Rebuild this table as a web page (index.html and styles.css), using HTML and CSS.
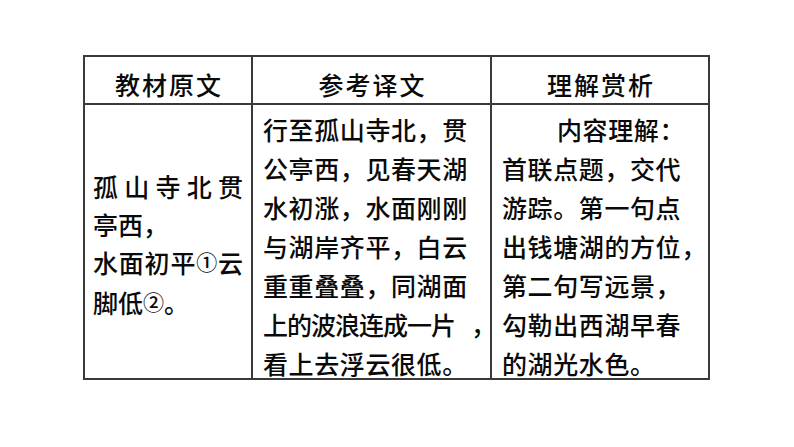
FILE: index.html
```html
<!DOCTYPE html>
<html lang="zh-CN">
<head>
<meta charset="utf-8">
<title>钱塘湖春行</title>
<link rel="stylesheet" href="styles.css">
</head>
<body>
<div class="page">
  <div class="grid">
    <div class="cell head">教材原文</div>
    <div class="cell head">参考译文</div>
    <div class="cell head">理解赏析</div>

    <div class="cell body orig">
      <div class="lines">
        <div class="line just">孤山寺北贯</div>
        <div class="line">亭西，</div>
        <div class="line just">水面初平<span class="note">①</span>云</div>
        <div class="line">脚低<span class="note">②</span>。</div>
      </div>
    </div>

    <div class="cell body text">
      <div class="line">行至孤山寺北，贯</div>
      <div class="line">公亭西，见春天湖</div>
      <div class="line">水初涨，水面刚刚</div>
      <div class="line">与湖岸齐平，白云</div>
      <div class="line">重重叠叠，同湖面</div>
      <div class="line"><span class="tight">上的波浪连成一片</span><span class="hang">，</span></div>
      <div class="line">看上去浮云很低。</div>
    </div>

    <div class="cell body text">
      <div class="line indent">内容理解：</div>
      <div class="line">首联点题，交代</div>
      <div class="line">游踪。第一句点</div>
      <div class="line">出钱塘湖的方位，</div>
      <div class="line">第二句写远景，</div>
      <div class="line">勾勒出西湖早春</div>
      <div class="line">的湖光水色。</div>
    </div>
  </div>
</div>
</body>
</html>
```

FILE: styles.css
```css
* {
  box-sizing: border-box;
}

html, body {
  margin: 0;
  padding: 0;
  background: #ffffff;
}

body {
  width: 794px;
  height: 447px;
  overflow: hidden;
  font-family: "Noto Sans CJK SC", "Noto Sans CJK JP", sans-serif;
  font-weight: 500;
  color: #0a0a0a;
}

.page {
  padding: 55px 0 0 83px;
}

.grid {
  display: grid;
  grid-template-columns: 168px 239px 218px;
  grid-template-rows: 48px 275px;
  width: 627px;
  border-left: 2px solid #3a3a3a;
  border-top: 2px solid #3a3a3a;
}

.cell {
  border-right: 2px solid #3a3a3a;
  border-bottom: 2px solid #3a3a3a;
  font-size: 25px;
  min-width: 0;
}

.head {
  text-align: center;
  line-height: 30px;
  padding: 12px 0 0 2px;
  letter-spacing: 2px;
}

.body {
  overflow: visible;
}

.orig {
  display: flex;
  flex-direction: column;
  justify-content: center;
  padding: 7px 8px 0 8px;
}

.orig .line {
  line-height: 38px;
  white-space: nowrap;
}

.just {
  text-align: justify;
  text-align-last: justify;
}

.note {
  font-size: 21px;
  position: relative;
  top: -3px;
}

.text {
  padding: 5px 0 0 10px;
}

.text .line {
  line-height: 39px;
  letter-spacing: 0.6px;
  white-space: nowrap;
}

.indent {
  padding-left: 55px;
}

.tight {
  letter-spacing: -1px;
}

.hang {
  margin-left: 16px;
}
```
